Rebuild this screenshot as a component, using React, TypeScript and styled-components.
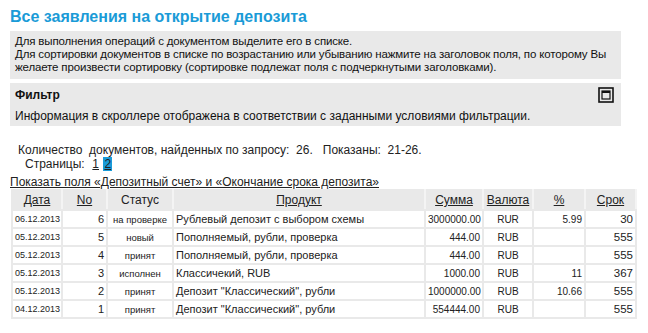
import React from "react";
import styled, { createGlobalStyle } from "styled-components";

const Global = createGlobalStyle`
  html, body { margin: 0; padding: 0; background: #fff; }
  body { font-family: "Liberation Sans", Arial, sans-serif; color: #222; }
`;

const Page = styled.div`
  padding: 6px 10px 0 10px;
`;

const Title = styled.h1`
  margin: 0 0 3px 0;
  font-size: 16px;
  line-height: 22px;
  font-weight: bold;
  color: #1a9bd7;
`;

const InfoBox = styled.div`
  width: 606px;
  background: #e9e9e9;
  padding: 4px 0 5px 5px;
  font-size: 11.5px;
  letter-spacing: -0.15px;
  line-height: 13px;
  color: #111;
`;

const FilterBox = styled.div`
  width: 599px;
  margin-top: 4px;
  background: #e9e9e9;
  padding: 4px 7px 3px 5px;
  font-size: 12px;
  color: #111;
`;

const FilterHead = styled.div`
  display: flex;
  justify-content: space-between;
  align-items: center;
  height: 16px;
  font-weight: bold;
  font-size: 12px;
`;

const FilterText = styled.div`
  margin-top: 6px;
  line-height: 14px;
`;

const Counts = styled.div`
  margin: 17px 0 0 8px;
  font-size: 12px;
  line-height: 14px;
  color: #222;
  white-space: pre;
`;

const PagesRow = styled.div`
  margin-left: 15px;
  font-size: 12px;
  line-height: 15px;
  white-space: pre;
`;

const PageLink = styled.a<{ $active?: boolean }>`
  color: #222;
  background: ${(p) => (p.$active ? "#1a9bd7" : "transparent")};
  text-decoration: underline;
  padding: 0 1px;
`;

const ShowLink = styled.a`
  display: block;
  margin-top: 4px;
  font-size: 12px;
  line-height: 13px;
  color: #222;
  text-decoration: underline;
`;

const Table = styled.table`
  margin-left: 1px;
  border-collapse: collapse;
  width: 626px;
  table-layout: fixed;
`;

const Th = styled.th<{ $sort?: boolean }>`
  background: #e9e9e9;
  border: 2px solid #e9e9e9;
  border-right-color: #f4f4f4;
  height: 18px;
  font-weight: normal;
  font-size: 12px;
  color: #222;
  text-decoration: ${(p) => (p.$sort ? "underline" : "none")};
  text-align: center;
  padding: 0 2px;
`;

const Td = styled.td<{ $align?: string; $size?: number }>`
  border: 2px solid #e9e9e9;
  height: 16px;
  padding: 0 2px;
  font-size: ${(p) => p.$size ?? 12}px;
  text-align: ${(p) => p.$align ?? "left"};
  white-space: nowrap;
  overflow: hidden;
  color: #222;
`;

const MinIcon = () => (
  <svg width="16" height="16" viewBox="0 0 16 16">
    <rect x="1" y="1" width="14" height="14" fill="none" stroke="#111" strokeWidth="1.6" />
    <rect x="4" y="4" width="8" height="8" fill="none" stroke="#111" strokeWidth="1.2" />
    <rect x="4" y="4" width="8" height="2" fill="#111" />
  </svg>
);

const rows = [
  ["06.12.2013", "6", "на проверке", "Рублевый депозит с выбором схемы", "3000000.00", "RUR", "5.99", "30"],
  ["05.12.2013", "5", "новый", "Пополняемый, рубли, проверка", "444.00", "RUB", "", "555"],
  ["05.12.2013", "4", "принят", "Пополняемый, рубли, проверка", "444.00", "RUB", "", "555"],
  ["05.12.2013", "3", "исполнен", "Классичекий, RUB", "1000.00", "RUB", "11", "367"],
  ["05.12.2013", "2", "принят", "Депозит \"Классический\", рубли", "1000000.00", "RUB", "10.66", "555"],
  ["04.12.2013", "1", "принят", "Депозит \"Классический\", рубли", "554444.00", "RUB", "", "555"],
];

export default function App() {
  return (
    <Page>
      <Global />
      <Title>Все заявления на открытие депозита</Title>
      <InfoBox>
        Для выполнения операций с документом выделите его в списке.
        <br />
        Для сортировки документов в списке по возрастанию или убыванию нажмите на заголовок поля, по которому Вы желаете произвести сортировку (сортировке подлежат поля с подчеркнутыми заголовками).
      </InfoBox>
      <FilterBox>
        <FilterHead>
          <span>Фильтр</span>
          <MinIcon />
        </FilterHead>
        <FilterText>Информация в скроллере отображена в соответствии с заданными условиями фильтрации.</FilterText>
      </FilterBox>
      <Counts>Количество  документов, найденных по запросу:  26.   Показаны:  21-26.</Counts>
      <PagesRow>
        Страницы:  <PageLink>1</PageLink> <PageLink $active>2</PageLink>
      </PagesRow>
      <ShowLink>Показать поля «Депозитный счет» и «Окончание срока депозита»</ShowLink>
      <Table>
        <colgroup>
          <col style={{ width: 50 }} />
          <col style={{ width: 45 }} />
          <col style={{ width: 66 }} />
          <col style={{ width: 252 }} />
          <col style={{ width: 58 }} />
          <col style={{ width: 50 }} />
          <col style={{ width: 52 }} />
          <col style={{ width: 51 }} />
        </colgroup>
        <thead>
          <tr>
            <Th $sort>Дата</Th>
            <Th $sort>No</Th>
            <Th>Статус</Th>
            <Th $sort>Продукт</Th>
            <Th $sort>Сумма</Th>
            <Th $sort>Валюта</Th>
            <Th $sort>%</Th>
            <Th $sort>Срок</Th>
          </tr>
        </thead>
        <tbody>
          {rows.map((r, i) => (
            <tr key={i}>
              <Td $size={9}>{r[0]}</Td>
              <Td $align="right" $size={11}>{r[1]}</Td>
              <Td $align="center" $size={9.5}>{r[2]}</Td>
              <Td $size={11}>{r[3]}</Td>
              <Td $align="right" $size={10}>{r[4]}</Td>
              <Td $align="center" $size={10}>{r[5]}</Td>
              <Td $align="right" $size={10}>{r[6]}</Td>
              <Td $align="right" $size={11.5}>{r[7]}</Td>
            </tr>
          ))}
        </tbody>
      </Table>
    </Page>
  );
}
